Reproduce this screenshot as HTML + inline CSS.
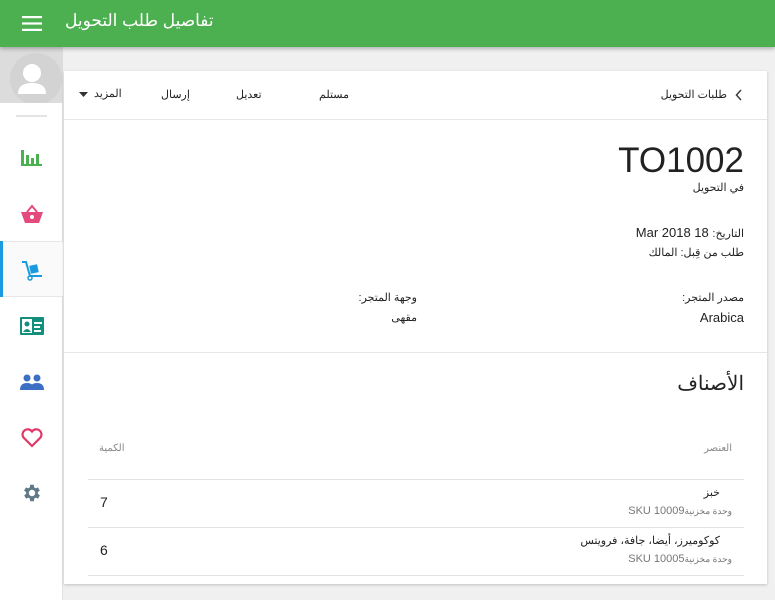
<!DOCTYPE html>
<html><head><meta charset="utf-8"><style>
*{margin:0;padding:0;box-sizing:border-box}
body{width:775px;height:600px;overflow:hidden;background:#f0f0f0;font-family:"Liberation Sans","Noto Sans CJK SC",sans-serif;position:relative;color:#222}
.hdr{position:absolute;left:0;top:0;width:775px;height:47px;background:#4caf50;box-shadow:0 2px 4px rgba(0,0,0,.25);z-index:3}
.hdr .t{position:absolute;left:65px;top:11px;color:#fff;font-size:17px}
.side{position:absolute;left:0;top:47px;width:63px;height:553px;background:#fff;border-right:1px solid #e2e2e2}
.av{position:absolute;left:0;top:0;width:63px;height:56px;background:#dcdcdc;overflow:hidden}
.ic{position:absolute;left:0;width:63px;height:56px;display:flex;align-items:center;justify-content:center}
.card{position:absolute;left:64px;top:71px;width:703px;height:513px;background:#fff;box-shadow:0 1px 3px rgba(0,0,0,.2)}
.a{position:absolute;white-space:nowrap;font-size:12px}
</style></head><body>
<div class="hdr">
<svg style="position:absolute;left:22px;top:16px" width="20" height="15"><rect y="0" width="20" height="2.2" fill="#fff"/><rect y="6.4" width="20" height="2.2" fill="#fff"/><rect y="12.8" width="20" height="2.2" fill="#fff"/></svg>
<div class="t" dir="rtl">تفاصيل طلب التحويل</div>
</div>
<div class="side">
<div class="av"><svg width="63" height="56"><circle cx="36" cy="32" r="26" fill="#d3d3d3"/><circle cx="32" cy="26" r="9" fill="#fff"/><path d="M18 47 Q18 36 32 36 Q46 36 46 47 Z" fill="#fff"/></svg></div>
<div style="position:absolute;left:16px;top:68px;width:31px;height:2px;background:#e4e4e4"></div>
<div class="ic" style="top:83px"><svg width="22" height="18"><rect x="0" y="1" width="3" height="16" fill="#4caf50"/><rect x="5" y="6" width="3" height="11" fill="#4caf50"/><rect x="10" y="9" width="3" height="8" fill="#4caf50"/><rect x="15" y="5" width="3" height="12" fill="#4caf50"/><rect x="0" y="15" width="21" height="2" fill="#4caf50"/></svg></div>
<div class="ic" style="top:139px"><svg width="24" height="22"><path d="M7 9 L12 3 L17 9" stroke="#e44a7c" stroke-width="2" fill="none"/><path d="M1 9 H23 L19 20 H5 Z" fill="#e44a7c"/><circle cx="12" cy="14" r="2" fill="#fff"/></svg></div>
<div style="position:absolute;left:0;top:194px;width:63px;height:56px;background:#fafafa;border-top:1px solid #e6e6e6;border-bottom:1px solid #e6e6e6"></div>
<div style="position:absolute;left:0;top:194px;width:3px;height:56px;background:#1a9ae0"></div>
<div class="ic" style="top:195px"><svg width="24" height="22"><path d="M2 3 H6 L10 17 H22" stroke="#1a9ae0" stroke-width="2" fill="none"/><rect x="10" y="6" width="8" height="8" fill="#1a9ae0" transform="rotate(-12 14 10)"/><circle cx="10" cy="19" r="2" fill="none" stroke="#1a9ae0" stroke-width="1.5"/></svg></div>
<div class="ic" style="top:251px"><svg width="24" height="18"><rect x="0" y="0" width="24" height="18" rx="1" fill="#138f7e"/><rect x="2" y="2" width="10" height="14" fill="#fff"/><circle cx="7" cy="7" r="2.5" fill="#138f7e"/><path d="M3 15 Q7 9 11 15Z" fill="#138f7e"/><rect x="14" y="5" width="8" height="2" fill="#fff"/><rect x="14" y="9" width="6" height="2" fill="#fff"/><rect x="14" y="13" width="7" height="2" fill="#fff"/></svg></div>
<div class="ic" style="top:307px"><svg width="24" height="16"><circle cx="7" cy="4" r="3.5" fill="#3a6fc4"/><circle cx="17" cy="4" r="3.5" fill="#3a6fc4"/><path d="M0 16 Q0 9 7 9 Q14 9 14 16Z" fill="#3a6fc4"/><path d="M10 16 Q10 9 17 9 Q24 9 24 16Z" fill="#3a6fc4"/></svg></div>
<div class="ic" style="top:363px"><svg width="22" height="20"><path d="M11 18 L2.5 9.5 A5 5 0 0 1 11 3.5 A5 5 0 0 1 19.5 9.5 Z" fill="none" stroke="#e0386a" stroke-width="2.2"/></svg></div>
<div class="ic" style="top:418px"><svg width="22" height="22" viewBox="0 0 24 24"><path fill="#5f7a86" d="M19.4 13a7.5 7.5 0 0 0 0-2l2.1-1.6-2-3.5-2.5 1a7.4 7.4 0 0 0-1.7-1L15 3h-4l-.4 2.9a7.4 7.4 0 0 0-1.7 1l-2.5-1-2 3.5L6.6 11a7.5 7.5 0 0 0 0 2l-2.1 1.6 2 3.5 2.5-1a7.4 7.4 0 0 0 1.7 1L11 21h4l.4-2.9a7.4 7.4 0 0 0 1.7-1l2.5 1 2-3.5zM13 15.5A3.5 3.5 0 1 1 13 8.5a3.5 3.5 0 0 1 0 7z" transform="translate(-1 0)"/></svg></div>
</div>
<div class="card">
<div style="position:absolute;left:0;top:48px;width:703px;height:1px;background:#e6e6e6"></div>
<svg style="position:absolute;left:671px;top:18px" width="8" height="12"><path d="M6 1 L1.5 6 L6 11" stroke="#444" stroke-width="1.6" fill="none"/></svg>
<div class="a" dir="rtl" style="right:40px;top:17px;font-size:11px">طلبات التحويل</div>
<div class="a" dir="rtl" style="left:255px;top:17px;font-size:11px">مستلم</div>
<div class="a" dir="rtl" style="left:172px;top:17px;font-size:11px">تعديل</div>
<div class="a" dir="rtl" style="left:97px;top:17px;font-size:11px">إرسال</div>
<div class="a" dir="rtl" style="left:30px;top:16px;font-size:11px">المزيد</div>
<svg style="position:absolute;left:15px;top:21px" width="10" height="6"><path d="M0 0 H9 L4.5 5Z" fill="#333"/></svg>
<div class="a" style="right:23px;top:70px;font-size:35px;color:#222">TO1002</div>
<div class="a" dir="rtl" style="right:23px;top:110px;font-size:11px">في التحويل</div>
<div class="a" dir="rtl" style="right:23px;top:154px;font-size:13px"><span style="font-size:11px">التاريخ:</span> <bdi dir="ltr">Mar 2018 18</bdi></div>
<div class="a" dir="rtl" style="right:23px;top:175px;font-size:11px">طلب من قِبل: المالك</div>
<div class="a" dir="rtl" style="right:23px;top:220px;font-size:11px">مصدر المتجر:</div>
<div class="a" style="right:23px;top:239px;font-size:13px">Arabica</div>
<div class="a" dir="rtl" style="right:350px;top:220px;font-size:11px">وجهة المتجر:</div>
<div class="a" dir="rtl" style="right:350px;top:240px;font-size:11px">مقهى</div>
<div style="position:absolute;left:0;top:281px;width:703px;height:1px;background:#e6e6e6"></div>
<div class="a" dir="rtl" style="right:23px;top:300px;font-size:20px">الأصناف</div>
<div class="a" dir="rtl" style="right:35px;top:372px;font-size:10px;color:#888">العنصر</div>
<div class="a" dir="rtl" style="left:35px;top:372px;font-size:10px;color:#888">الكمية</div>
<div style="position:absolute;left:24px;top:408px;width:656px;height:1px;background:#e2e2e2"></div>
<div class="a" dir="rtl" style="right:47px;top:415px;font-size:11px">خبز</div>
<div class="a" dir="rtl" style="right:35px;top:434px;font-size:11px;color:#777"><span style="font-size:9px">وحدة مخزنية</span><bdi dir="ltr">SKU 10009</bdi></div>
<div class="a" style="left:36px;top:423px;font-size:14px">7</div>
<div style="position:absolute;left:24px;top:456px;width:656px;height:1px;background:#e2e2e2"></div>
<div class="a" dir="rtl" style="right:47px;top:463px;font-size:11px">كوكوميرز، أيضا، جافة، فرويتس</div>
<div class="a" dir="rtl" style="right:35px;top:482px;font-size:11px;color:#777"><span style="font-size:9px">وحدة مخزنية</span><bdi dir="ltr">SKU 10005</bdi></div>
<div class="a" style="left:36px;top:471px;font-size:14px">6</div>
<div style="position:absolute;left:24px;top:504px;width:656px;height:1px;background:#e2e2e2"></div>
</div>
</body></html>
